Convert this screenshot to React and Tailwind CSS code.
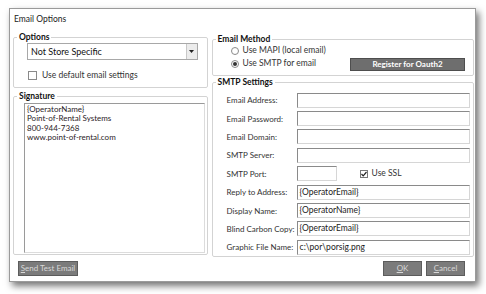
import React from "react";

const font = { fontFamily: 'Lato, "Noto Sans", sans-serif' };

function Group({ title, className, children }) {
  return (
    <fieldset className={`border border-[#d3d3d3] rounded-[2px] px-0 pt-0 pb-0 min-w-0 ${className}`}>
      <legend className="ml-[3px] px-[2px] text-[8.5px] font-bold leading-[10px] text-[#111] whitespace-nowrap">{title}</legend>
      {children}
    </fieldset>
  );
}

function Input({ value, className = "" }) {
  return (
    <div className={`h-[15px] bg-white border border-t-[#8a8a8a] border-l-[#8a8a8a] border-r-[#d6d6d6] border-b-[#d6d6d6] px-[2px] text-[8.5px] leading-[13px] text-[#222] whitespace-nowrap overflow-hidden ${className}`}>
      {value}
    </div>
  );
}

function Row({ label, value }) {
  return (
    <div className="flex items-center h-[18.4px]">
      <div className="w-[84px] shrink-0 pl-[14px] text-[8px] text-[#333] whitespace-nowrap">{label}</div>
      <Input value={value} className="flex-1" />
    </div>
  );
}

function GrayButton({ children, className = "" }) {
  return (
    <div className={`h-[15px] bg-[#7b7b7b] border border-[#5c5c5c] text-[#d8d8d8] text-[8px] leading-[13px] flex items-center justify-center whitespace-nowrap ${className}`}>
      {children}
    </div>
  );
}

export default function App() {
  return (
    <div className="w-[486px] h-[294px] bg-white relative overflow-hidden" style={font}>
      <div className="absolute left-[9px] top-[8px] w-[467px] h-[274px] bg-white border border-[#9a9a9a] shadow-[3px_4px_7px_rgba(0,0,0,0.55)] flex flex-col">
        <div className="h-[24px] pl-[4px] pt-[5px] text-[8.5px] leading-[10px] text-[#222]">Email Options</div>
        <div className="flex gap-[4px] pl-[3px] pr-[1px]">
          <div className="w-[195px] flex flex-col gap-[3px]">
            <Group title="Options" className="h-[56px] -mt-[1px]">
              <div className="pl-[13px] pr-[9px] pt-[1px]">
                <div className="h-[17px] bg-white border border-[#a8a8a8] flex items-center">
                  <div className="flex-1 pl-[3px] text-[9px] text-[#111] leading-[15px]">Not Store Specific</div>
                  <div className="w-[11px] h-[15px] bg-[#ececec] border-l border-[#c8c8c8] flex items-center justify-center">
                    <svg width="5" height="3" viewBox="0 0 5 3"><path d="M0 0h5L2.5 3z" fill="#222" /></svg>
                  </div>
                </div>
                <div className="flex items-center mt-[10px] pl-[1px] gap-[5px]">
                  <div className="w-[9px] h-[9px] border border-[#8a8a8a] bg-white" />
                  <div className="text-[8.5px] text-[#333] leading-[10px]">Use default email settings</div>
                </div>
              </div>
            </Group>
            <Group title="Signature" className="h-[164px]">
              <div className="pl-[10px] pr-[2px] pt-[2px]">
                <div className="h-[150px] bg-white border border-t-[#9a9a9a] border-l-[#9a9a9a] border-r-[#dcdcdc] border-b-[#dcdcdc] pl-[2px] pt-[1px] text-[8px] leading-[9.3px] text-[#2a2226]">
                  <div>{"{OperatorName}"}</div>
                  <div>Point-of-Rental Systems</div>
                  <div>800-944-7368</div>
                  <div>www.point-of-rental.com</div>
                </div>
              </div>
            </Group>
          </div>
          <div className="w-[263px] flex flex-col gap-[1px]">
            <Group title="Email Method" className="h-[42px] mt-[1px]">
              <div className="flex">
                <div className="pl-[18px] flex flex-col gap-[2px] pt-[1px]">
                  <div className="flex items-center gap-[4px]">
                    <div className="w-[8px] h-[8px] rounded-full border border-[#8a8a8a] bg-white" />
                    <div className="text-[8.5px] text-[#333] leading-[11px]">Use MAPI (local email)</div>
                  </div>
                  <div className="flex items-center gap-[4px]">
                    <div className="w-[8px] h-[8px] rounded-full border border-[#8a8a8a] bg-white flex items-center justify-center">
                      <div className="w-[4px] h-[4px] rounded-full bg-[#333]" />
                    </div>
                    <div className="text-[8.5px] text-[#333] leading-[11px]">Use SMTP for email</div>
                  </div>
                </div>
                <div className="ml-auto mr-[8px] mt-[14px] w-[115px] h-[13px] bg-[#6e6e6e] border border-[#4e4e4e] text-white text-[8px] font-bold leading-[11px] text-center">
                  Register for Oauth2
                </div>
              </div>
            </Group>
            <Group title="SMTP Settings" className="h-[180px]">
              <div className="pr-[3px] pt-[4px]">
                <Row label="Email Address:" value="" />
                <Row label="Email Password:" value="" />
                <Row label="Email Domain:" value="" />
                <Row label="SMTP Server:" value="" />
                <div className="flex items-center h-[18.4px]">
                  <div className="w-[84px] shrink-0 pl-[14px] text-[8px] text-[#333] whitespace-nowrap">SMTP Port:</div>
                  <Input value="" className="w-[40px]" />
                  <div className="ml-[23px] flex items-center gap-[4px]">
                    <div className="w-[8px] h-[8px] border border-[#777] bg-white flex items-center justify-center">
                      <svg width="6" height="6" viewBox="0 0 6 6"><path d="M0.5 3l1.7 1.8L5.5 1" stroke="#222" strokeWidth="1.2" fill="none" /></svg>
                    </div>
                    <div className="text-[8.5px] text-[#333]">Use SSL</div>
                  </div>
                </div>
                <Row label="Reply to Address:" value="{OperatorEmail}" />
                <Row label="Display Name:" value="{OperatorName}" />
                <Row label="Blind Carbon Copy:" value="{OperatorEmail}" />
                <Row label="Graphic File Name:" value="c:\por\porsig.png" />
              </div>
            </Group>
          </div>
        </div>
        <div className="flex items-center pl-[8px] pr-[10px] mt-[4px]">
          <GrayButton className="w-[60px]"><span><span className="underline">S</span>end Test Email</span></GrayButton>
          <GrayButton className="w-[39px] ml-auto"><span><span className="underline">O</span>K</span></GrayButton>
          <GrayButton className="w-[39px] ml-[4px]"><span><span className="underline">C</span>ancel</span></GrayButton>
        </div>
      </div>
    </div>
  );
}
